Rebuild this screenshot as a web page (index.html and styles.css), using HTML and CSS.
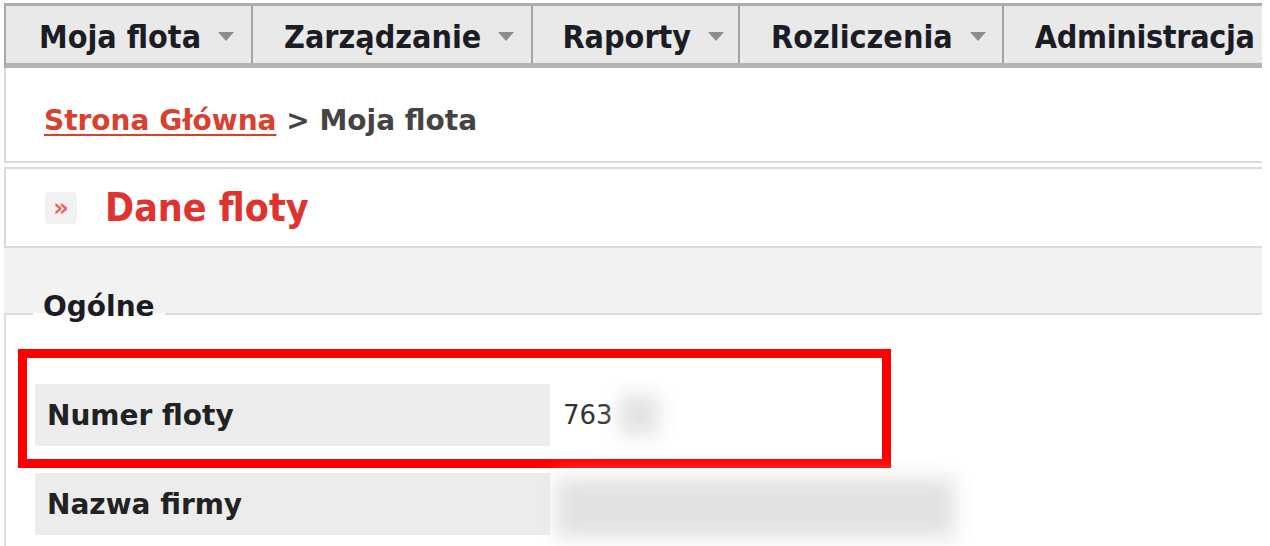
FILE: index.html
```html
<!DOCTYPE html>
<html lang="pl">
<head>
    <meta charset="UTF-8">
    <title>Moja flota</title>
    <link rel="stylesheet" href="styles.css">
</head>
<body>
    <div class="page">
        <ul class="menu">
            <li class="menu-item">Moja flota</li>
            <li class="menu-item">Zarządzanie</li>
            <li class="menu-item">Raporty</li>
            <li class="menu-item">Rozliczenia</li>
            <li class="menu-item last">Administracja</li>
        </ul>

        <div class="box breadcrumb">
            <span><a href="#">Strona Główna</a> &gt; Moja flota</span>
        </div>

        <div class="box title-box">
            <span class="title-icon">»</span>
            <h1>Dane floty</h1>
        </div>

        <div class="content">
            <fieldset>
                <legend>Ogólne</legend>
                <div class="rows">
                    <div class="highlight"></div>
                    <div class="row">
                        <div class="label">Numer floty</div>
                        <div class="value">763<span class="hidden-value short"></span></div>
                    </div>
                    <div class="row">
                        <div class="label">Nazwa firmy</div>
                        <div class="value"><span class="hidden-value long"></span></div>
                    </div>
                </div>
            </fieldset>
        </div>
    </div>
</body>
</html>
```

FILE: styles.css
```css
body {
    margin: 0;
    background-color: #fff;
    font-family: "DejaVu Sans", Verdana, sans-serif;
    color: #222;
}
.page {
    margin-left: 4px;
    width: 1258px;
    height: 543px;
    overflow: hidden;
    margin-top: 3px;
}
.menu {
    display: flex;
    list-style: none;
    margin: 0;
    padding: 0;
    height: 57px;
    background-color: #e9e9e9;
    border-top: 3px solid #adadad;
    border-bottom: 5px solid #b4b4b4;
    border-left: 2px solid #a8a8a8;
    white-space: nowrap;
}
.menu-item {
    display: flex;
    align-items: center;
    padding: 4px 17px 0 31px;
    border-right: 2px solid #a3a3a3;
    font-size: 32px;
    font-stretch: condensed;
    font-weight: bold;
    color: #1c1c24;
}
.menu-item:first-child {
    padding-left: 33px;
}
.menu-item:nth-child(3) {
    padding-left: 29px;
    padding-right: 14px;
}
.menu-item:nth-child(4) {
    padding-right: 16px;
}
.menu-item::after {
    content: "";
    margin-left: 17px;
    border-left: 8px solid transparent;
    border-right: 8px solid transparent;
    border-top: 9px solid #8c8c8c;
}
.menu-item.last {
    border-right: none;
    letter-spacing: -0.3px;
}
.menu-item.last::after {
    display: none;
}
.box {
    background-color: #fff;
    border: 2px solid #dadada;
    border-right: none;
}
.breadcrumb {
    border-top: none;
    height: 81px;
    padding: 12px 0 0 38px;
    display: flex;
    align-items: center;
    font-size: 28px;
    font-weight: bold;
    color: #444;
    white-space: pre;
}
.breadcrumb a {
    color: #d8412f;
    text-decoration: underline;
    text-decoration-thickness: 2px;
    text-underline-offset: 4px;
}
.title-box {
    margin-top: 4px;
    height: 77px;
    display: flex;
    align-items: center;
    padding-left: 39px;
}
.title-icon {
    width: 32px;
    height: 32px;
    border-radius: 4px;
    background-color: #f1f1f1;
    color: #e8625c;
    font-size: 24px;
    font-weight: bold;
    display: flex;
    align-items: center;
    justify-content: center;
    margin-right: 28px;
}
h1 {
    margin: 0;
    font-size: 39px;
    font-stretch: condensed;
    font-weight: bold;
    color: #e0322e;
}
.content {
    background-color: #f2f2f2;
    padding-top: 42px;
}
fieldset {
    margin: 0;
    padding: 0 0 40px 0;
    background-color: #fff;
    border: 2px solid #dcdcdc;
    border-right: none;
    min-height: 300px;
}
legend {
    margin-left: 27px;
    padding: 0 10px 14px;
    font-size: 28px;
    font-weight: bold;
    color: #1c1c24;
}
.rows {
    position: relative;
    padding: 47px 0 0 29px;
    display: flex;
    flex-direction: column;
    gap: 27px;
}
.highlight {
    position: absolute;
    left: 12px;
    top: 12px;
    width: 855px;
    height: 101px;
    border: 9px solid #ff0000;
}
.row {
    display: flex;
    align-items: center;
    height: 62px;
}
.label {
    width: 503px;
    height: 100%;
    padding-left: 12px;
    background-color: #ececec;
    display: flex;
    align-items: center;
    font-size: 28px;
    font-weight: bold;
}
.value {
    padding-left: 13px;
    font-size: 26px;
    color: #333;
    display: flex;
    align-items: center;
}
.hidden-value {
    display: block;
    background-color: #e2e2e2;
    filter: blur(10px);
}
.hidden-value.short {
    width: 40px;
    height: 40px;
    margin-left: 6px;
}
.hidden-value.long {
    width: 400px;
    height: 60px;
    margin-top: 8px;
    margin-left: -8px;
}
```
